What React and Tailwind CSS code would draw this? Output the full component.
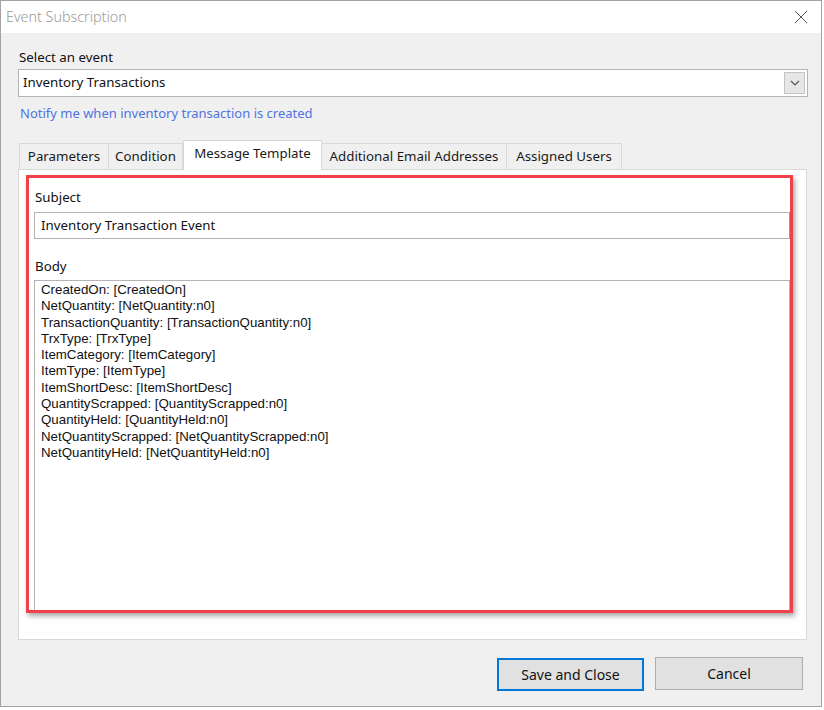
import React from "react";

const ui = { fontFamily: '"Segoe UI", "Noto Sans", "Open Sans", sans-serif' };
const mono = { fontFamily: '"Liberation Sans", Arial, sans-serif' };

const bodyLines = [
  "CreatedOn: [CreatedOn]",
  "NetQuantity: [NetQuantity:n0]",
  "TransactionQuantity: [TransactionQuantity:n0]",
  "TrxType: [TrxType]",
  "ItemCategory: [ItemCategory]",
  "ItemType: [ItemType]",
  "ItemShortDesc: [ItemShortDesc]",
  "QuantityScrapped: [QuantityScrapped:n0]",
  "QuantityHeld: [QuantityHeld:n0]",
  "NetQuantityScrapped: [NetQuantityScrapped:n0]",
  "NetQuantityHeld: [NetQuantityHeld:n0]",
];

function Tab({ label, w, active }) {
  if (active) {
    return (
      <div
        className={`${w} h-[30px] -mb-[1px] bg-white border border-b-0 border-[#d9d9d9] flex items-center justify-center text-[13.3px] text-[#1a1a1a] relative z-10 pb-[3px]`}
      >
        {label}
      </div>
    );
  }
  return (
    <div
      className={`${w} h-[26px] mt-[3px] bg-[#f0f0f0] border border-b-0 border-[#d9d9d9] -ml-[1px] first:ml-0 flex items-center justify-center text-[13.3px] text-[#1a1a1a]`}
    >
      {label}
    </div>
  );
}

export default function App() {
  return (
    <div className="w-[824px] h-[710px] bg-white" style={ui}>
      <div className="w-[822px] h-[707px] border border-[#a3a3a3] bg-[#f0f0f0] flex flex-col">
        {/* title bar */}
        <div className="h-[32px] bg-white flex items-center justify-between pl-[5px] pr-[13px] shrink-0">
          <span className="text-[14.3px] text-[#9a9a9a] font-light">Event Subscription</span>
          <svg width="14" height="14" viewBox="0 0 14 14">
            <path d="M1 1 L13 13 M13 1 L1 13" stroke="#555" strokeWidth="1" />
          </svg>
        </div>

        <div className="flex flex-col pl-[17px] pr-[14px]">
          <div className="mt-[14px] h-[20px] leading-[20px] text-[13.3px] text-[#111] pl-[1px]">Select an event</div>
          <div className="mt-[2px] h-[28px] w-[790px] bg-white border border-[#b4b4b4] flex items-center justify-between">
            <span className="pl-[4px] text-[13.3px] text-[#111]">Inventory Transactions</span>
            <div className="w-[21px] h-[22px] mr-[2px] bg-[#e6e6e6] border border-[#c4c4c4] flex items-center justify-center">
              <svg width="10" height="6" viewBox="0 0 10 6">
                <path d="M1 1 L5 5 L9 1" stroke="#555" strokeWidth="1.2" fill="none" />
              </svg>
            </div>
          </div>
          <div className="mt-[6px] h-[20px] leading-[20px] text-[13px] text-[#4f74e0] pl-[2px]">
            Notify me when inventory transaction is created
          </div>

          {/* tabs */}
          <div className="mt-[17px] flex items-end pl-[1px]">
            <Tab label="Parameters" w="w-[90px]" />
            <Tab label="Condition" w="w-[75px]" />
            <Tab label="Message Template" w="w-[139px]" active />
            <Tab label="Additional Email Addresses" w="w-[186px]" />
            <Tab label="Assigned Users" w="w-[116px]" />
          </div>
          <div className="w-[789px] h-[471px] bg-white border border-[#d9d9d9] pt-[5px] pl-[7px]">
            <div
              className="w-[767px] h-[438px] border-[3px] border-[#f0404a] flex flex-col pl-[5px]"
              style={{ boxShadow: "2px 3px 5px rgba(0,0,0,0.35)" }}
            >
              <div className="mt-[9px] h-[20px] leading-[20px] text-[13.3px] text-[#111] pl-[1px]">Subject</div>
              <div className="mt-[5px] h-[27px] bg-white border border-[#b4b4b4] border-r-[#9a9a9a] flex items-center pl-[6px] text-[13.3px] text-[#111]">
                Inventory Transaction Event
              </div>
              <div className="mt-[17px] h-[20px] leading-[20px] text-[13.3px] text-[#111] pl-[1px]">Body</div>
              <div className="mt-[4px] flex-1 bg-white border border-b-0 border-[#b4b4b4] pl-[6px] pt-[1px] text-[13.3px] leading-[16.3px] text-[#111]" style={mono}>
                {bodyLines.map((l) => (
                  <div key={l}>{l}</div>
                ))}
              </div>
            </div>
          </div>

          {/* buttons */}
          <div className="mt-[17px] flex items-start pl-[479px]">
            <button className="w-[147px] h-[33px] mt-[1px] bg-[#e1e1e1] border-2 border-[#0078d7] text-[14px] text-[#111]">
              Save and Close
            </button>
            <button className="ml-[11px] w-[148px] h-[33px] bg-[#e1e1e1] border border-[#adadad] text-[14px] text-[#111]">
              Cancel
            </button>
          </div>
        </div>
      </div>
    </div>
  );
}
